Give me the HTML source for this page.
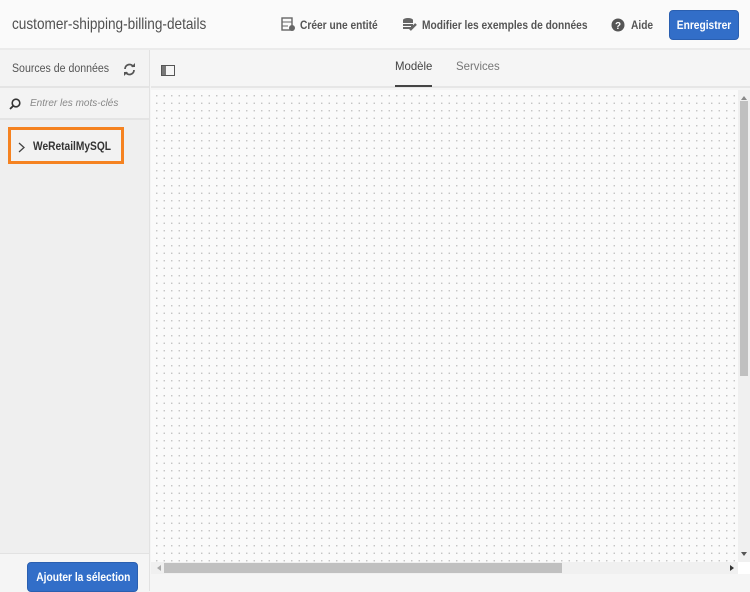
<!DOCTYPE html>
<html><head><meta charset="utf-8"><style>
*{box-sizing:border-box;margin:0;padding:0}
body{width:750px;height:591px;overflow:hidden;background:#f5f5f5;font-family:"Liberation Sans",sans-serif;position:relative;color:#4b4b4b}
.sx{display:inline-block;transform:scaleX(0.85);transform-origin:left center;white-space:nowrap}
.hdr{position:absolute;left:0;top:0;width:750px;height:50px;background:#fafafa;border-bottom:2px solid #ebebeb}
.title{position:absolute;left:12px;top:16px;font-size:16px;color:#505050;white-space:nowrap}
.act{position:absolute;top:18px;font-size:12px;font-weight:bold;color:#555;white-space:nowrap}
.btn{position:absolute;background:#326ec8;color:#fff;font-weight:bold;font-size:12px;border-radius:4px;text-align:center;border:1px solid #2a5fb0;white-space:nowrap;overflow:hidden}
.side{position:absolute;left:0;top:50px;width:150px;height:503px;background:#efefef;border-right:1px solid #e2e2e2}
.sh{height:38px;border-bottom:2px solid #e4e4e4;background:#f3f3f3;font-size:11.5px;padding:13px 0 0 12px;color:#555;position:relative}
.search{height:32px;border-bottom:2px solid #e4e4e4;background:#f3f3f3;position:relative;font-size:10px;font-style:italic;color:#888;padding:10px 0 0 30px}
.tree{position:absolute;left:8px;top:127px;width:116px;height:37px;border:3px solid #f58220;background:#f2f2f2;font-size:12px;font-weight:bold;color:#333;padding:9px 0 0 22px}
.foot{position:absolute;left:0;top:553px;width:150px;height:38px;background:#f5f5f5;border-right:1px solid #e2e2e2;border-top:1px solid #e2e2e2}
.tabs{position:absolute;left:151px;top:50px;width:599px;height:38px;background:#f5f5f5;border-bottom:2px solid #e6e6e6}
.canvas{position:absolute;left:151px;top:90px;width:587px;height:472px;background-color:#fafafa;background-image:radial-gradient(circle,#c0c0c0 0.6px,transparent 0.9px);background-size:7.5px 7.5px;background-position:2px 2px}
</style></head><body>
<div class="hdr">
<div class="title"><span class="sx">customer-shipping-billing-details</span></div>
<svg style="position:absolute;left:281px;top:17px" width="14" height="15" viewBox="0 0 14 15"><rect x="1" y="1" width="10" height="12" fill="none" stroke="#666" stroke-width="1.4"/><line x1="1" y1="5" x2="11" y2="5" stroke="#666"/><line x1="1" y1="9" x2="7" y2="9" stroke="#666"/><circle cx="11" cy="11" r="3" fill="#666"/></svg>
<div class="act" style="left:300px"><span class="sx">Créer une entité</span></div>
<svg style="position:absolute;left:402px;top:17px" width="15" height="15" viewBox="0 0 15 15"><ellipse cx="6" cy="3" rx="5" ry="2" fill="#666"/><rect x="1" y="3" width="10" height="9" fill="#666"/><path d="M8 13 L14 7" stroke="#666" stroke-width="2.5"/><line x1="1" y1="6.5" x2="11" y2="6.5" stroke="#fafafa"/><line x1="1" y1="9.5" x2="9" y2="9.5" stroke="#fafafa"/></svg>
<div class="act" style="left:422px"><span class="sx">Modifier les exemples de données</span></div>
<svg style="position:absolute;left:611px;top:18px" width="14" height="14" viewBox="0 0 14 14"><circle cx="7" cy="7" r="6.5" fill="#555"/><text x="7" y="11" font-size="10" font-weight="bold" fill="#fff" text-anchor="middle" font-family="Liberation Sans">?</text></svg>
<div class="act" style="left:631px"><span class="sx">Aide</span></div>
<div class="btn" style="left:669px;top:10px;width:70px;height:30px;line-height:28px"><span class="sx" style="transform-origin:center">Enregistrer</span></div>
</div>
<div class="side">
<div class="sh"><span class="sx" style="transform:scaleX(0.92)">Sources de données</span>
<svg style="position:absolute;left:123px;top:13px" width="13" height="13" viewBox="0 0 13 13"><path d="M2 6 A4.5 4.5 0 0 1 10.5 4" fill="none" stroke="#555" stroke-width="1.8"/><path d="M11 7 A4.5 4.5 0 0 1 2.5 9" fill="none" stroke="#555" stroke-width="1.8"/><path d="M8 4 L12 4 L12 0Z" fill="#555"/><path d="M5 9 L1 9 L1 13Z" fill="#555"/></svg></div>
<div class="search"><svg style="position:absolute;left:9px;top:10px" width="12" height="12" viewBox="0 0 12 12"><circle cx="7" cy="5" r="3.8" fill="none" stroke="#333" stroke-width="1.6"/><line x1="4.3" y1="7.8" x2="1" y2="11" stroke="#333" stroke-width="1.8"/></svg>Entrer les mots-clés</div>
</div>
<div class="tree"><svg style="position:absolute;left:7px;top:12px" width="7" height="11" viewBox="0 0 7 11"><path d="M1 1 L6 5.5 L1 10" fill="none" stroke="#444" stroke-width="1.3"/></svg><span class="sx">WeRetailMySQL</span></div>
<div class="foot"><div class="btn" style="left:27px;top:8px;width:111px;height:30px;line-height:28px"><span class="sx" style="transform-origin:center">Ajouter la sélection</span></div></div>
<div class="tabs">
<svg style="position:absolute;left:10px;top:15px" width="14" height="11" viewBox="0 0 14 11"><rect x="0.5" y="0.5" width="13" height="10" fill="none" stroke="#555"/><rect x="1" y="1" width="4" height="9" fill="#777"/></svg>
<div style="position:absolute;left:244px;top:9px;font-size:12px;color:#444"><span class="sx" style="transform:scaleX(0.95)">Modèle</span></div>
<div style="position:absolute;left:244px;top:35px;width:37px;height:2px;background:#444"></div>
<div style="position:absolute;left:305px;top:9px;font-size:12px;color:#777"><span class="sx" style="transform:scaleX(0.95)">Services</span></div>
</div>
<div class="canvas"></div>
<div style="position:absolute;left:738px;top:90px;width:12px;height:472px;background:#f0f0f0"></div>
<div style="position:absolute;left:740px;top:101px;width:8px;height:275px;background:#c0c0c0"></div>
<div style="position:absolute;left:741px;top:93px;width:0;height:0;border:3px solid transparent;border-bottom:4px solid #888"></div>
<div style="position:absolute;left:741px;top:552px;width:0;height:0;border:3px solid transparent;border-top:4px solid #555"></div>
<div style="position:absolute;left:151px;top:562px;width:587px;height:12px;background:#f0f0f0"></div>
<div style="position:absolute;left:164px;top:563px;width:398px;height:10px;background:#c0c0c0"></div>
<div style="position:absolute;left:730px;top:565px;border:3px solid transparent;border-left:4px solid #333"></div>
<div style="position:absolute;left:154px;top:565px;border:3px solid transparent;border-right:4px solid #aaa"></div>
<div style="position:absolute;left:738px;top:562px;width:12px;height:12px;background:#fff"></div>
</body></html>
